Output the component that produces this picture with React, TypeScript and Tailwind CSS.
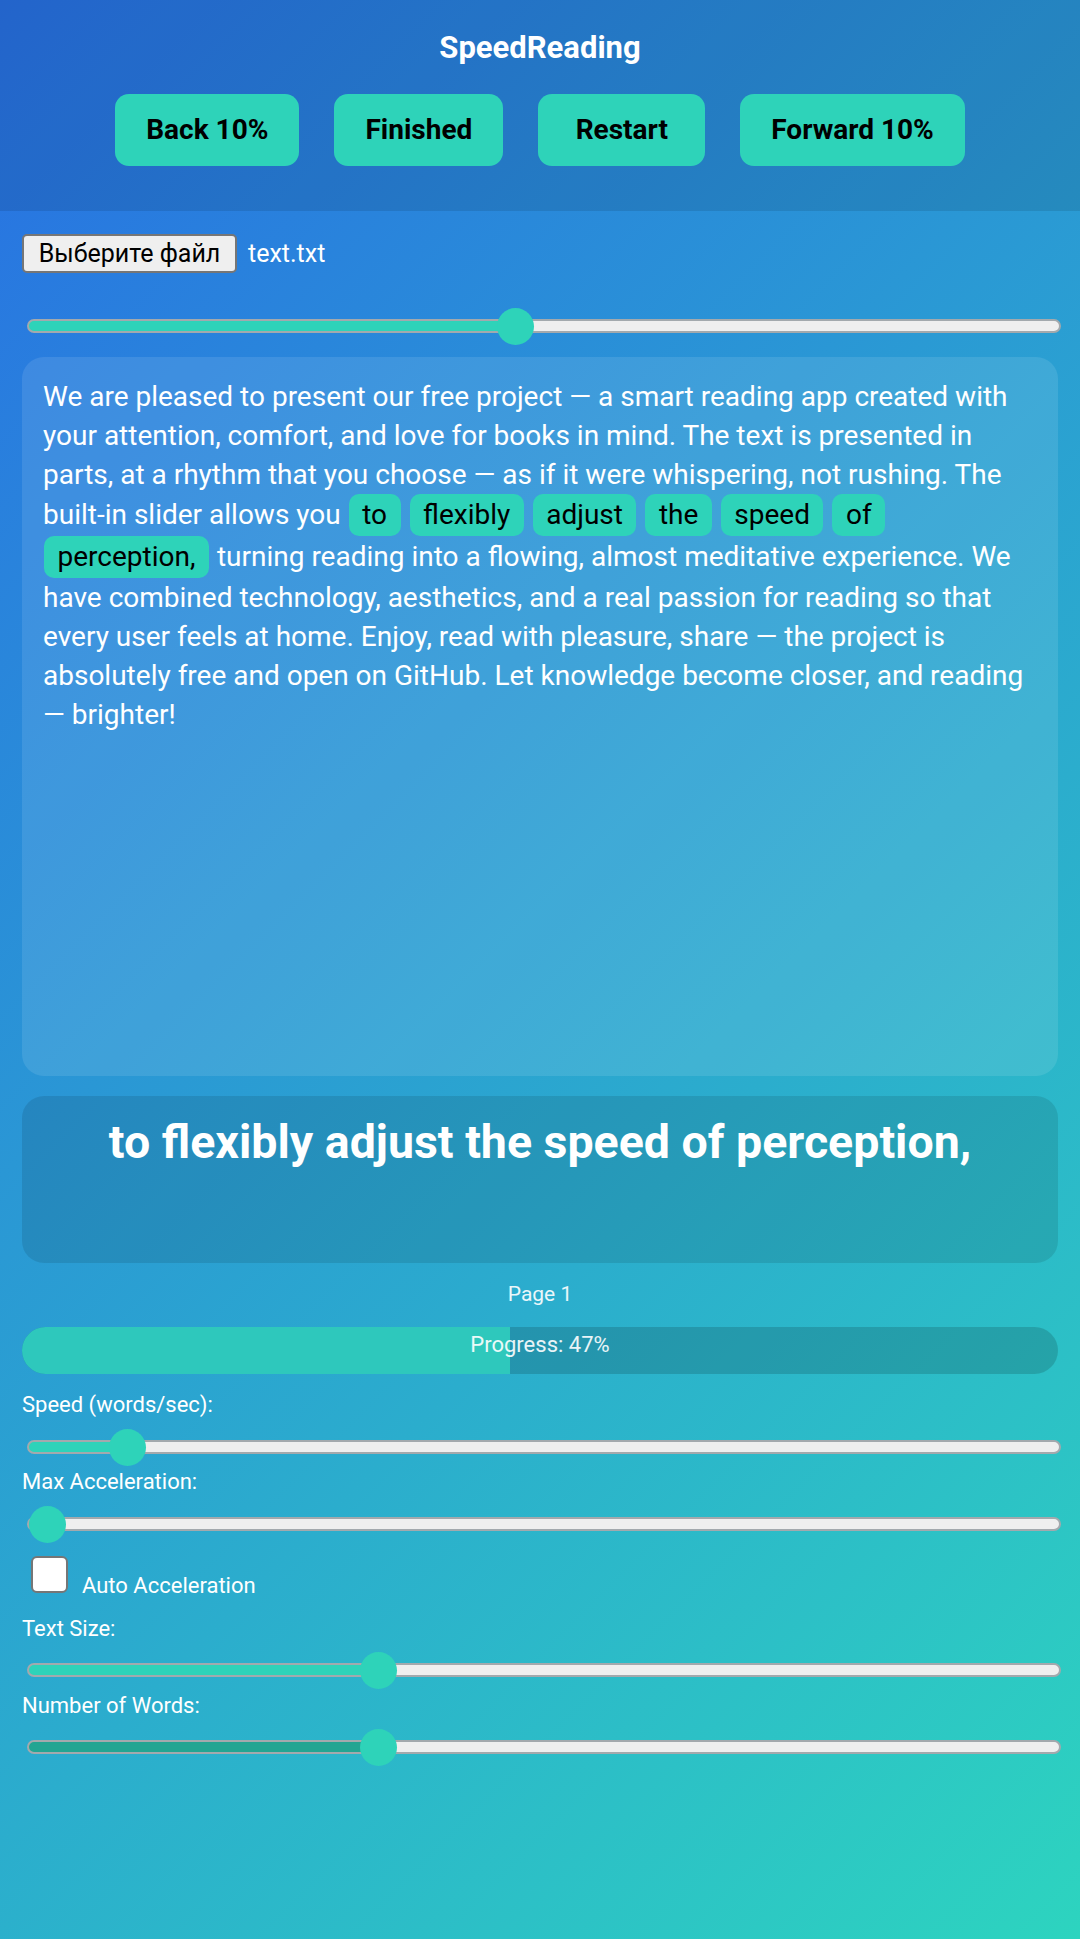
import { useState } from 'react';

const TEXT_BEFORE =
  'We are pleased to present our free project — a smart reading app created with your attention, comfort, and love for books in mind. The text is presented in parts, at a rhythm that you choose — as if it were whispering, not rushing. The built-in slider allows you';
const CHUNK = ['to', 'flexibly', 'adjust', 'the', 'speed', 'of', 'perception,'];
const TEXT_AFTER =
  'turning reading into a flowing, almost meditative experience. We have combined technology, aesthetics, and a real passion for reading so that every user feels at home. Enjoy, read with pleasure, share — the project is absolutely free and open on GitHub. Let knowledge become closer, and reading — brighter!';

function Slider({
  value,
  min = 0,
  max = 100,
  fill = '#2ed3b9',
  onChange,
}: {
  value: number;
  min?: number;
  max?: number;
  fill?: string;
  onChange: (v: number) => void;
}) {
  const p = (value - min) / (max - min);
  return (
    <input
      type="range"
      min={min}
      max={max}
      step="any"
      value={value}
      onChange={(e) => onChange(Number(e.target.value))}
      className="block ml-[5px] w-[calc(100%-2px)] h-[14px] appearance-none rounded-full border-2 border-[#a3a9ad] outline-none [&::-webkit-slider-thumb]:appearance-none [&::-webkit-slider-thumb]:w-[37px] [&::-webkit-slider-thumb]:h-[37px] [&::-webkit-slider-thumb]:rounded-full [&::-webkit-slider-thumb]:bg-[#2ed3b9] [&::-webkit-slider-thumb]:cursor-pointer"
      style={{
        background: `linear-gradient(to right, ${fill} calc(18.5px + ${p} * (100% - 37px)), #efefef 0)`,
      }}
    />
  );
}

export default function App() {
  const [position, setPosition] = useState(47.1);
  const [speed, setSpeed] = useState(8.1);
  const [accel, setAccel] = useState(0);
  const [auto, setAuto] = useState(false);
  const [size, setSize] = useState(33.3);
  const [words, setWords] = useState(33.3);

  return (
    <div className="min-h-screen bg-[linear-gradient(135deg,#2870e3,#2dd4bf)] font-['Roboto',sans-serif] text-white pb-10">
      {/* Шапка */}
      <header className="bg-black/10 pt-[30px] pb-[45px] flex flex-col items-center">
        <h1 className="text-[31px] leading-[36px] font-bold">SpeedReading</h1>
        <div className="mt-[28px] flex gap-[35px]">
          {['Back 10%', 'Finished', 'Restart', 'Forward 10%'].map((b) => (
            <button
              key={b}
              className="h-[72px] min-w-[167px] px-[31px] rounded-[14px] bg-[#2ed3b9] text-black text-[28px] font-bold"
            >
              {b}
            </button>
          ))}
        </div>
      </header>

      <main className="px-[22px] pt-[23px]">
        {/* Файл */}
        <div className="flex items-center gap-[11px]">
          <label className="h-[39px] w-[215px] flex items-center justify-center rounded-[5px] border-2 border-[#767676] bg-[#efefef] text-black text-[25px]">
            Выберите файл
          </label>
          <span className="text-[25px]">text.txt</span>
        </div>

        <div className="mt-[46px]">
          <Slider value={position} onChange={setPosition} />
        </div>

        {/* Текст */}
        <div className="mt-[24px] h-[719px] rounded-[22px] bg-white/10 px-[21px] py-[20px] text-[28px] leading-[39px]">
          {TEXT_BEFORE}{' '}
          {CHUNK.map((w) => (
            <span key={w}>
              <span className="inline-block mx-px px-[13.5px] py-[4px] leading-[34px] rounded-[10px] bg-[#2ed3b9] text-black">
                {w}
              </span>{' '}
            </span>
          ))}
          {TEXT_AFTER}
        </div>

        {/* Текущие слова */}
        <div className="mt-[20px] h-[167px] rounded-[22px] bg-black/10 pt-[18px] text-center text-[46.5px] leading-[56px] font-bold">
          {CHUNK.join(' ')}
        </div>

        <div className="mt-[18px] text-center text-[21px] leading-[26px] text-white/90">Page 1</div>

        <div className="relative mt-[20px] h-[47px] rounded-full bg-black/15 overflow-hidden">
          <div className="h-full bg-[#2ec8bc]" style={{ width: `${position}%` }} />
          <div className="absolute inset-0 pt-[5px] text-center text-[22px] leading-[26px] text-white/90">
            Progress: {Math.round(position)}%
          </div>
        </div>

        {/* Настройки */}
        <div className="mt-[19px] text-[22px] leading-[24px]">Speed (words/sec):</div>
        <div className="mt-[23px]">
          <Slider value={speed} onChange={setSpeed} />
        </div>

        <div className="mt-[16px] text-[22px] leading-[24px]">Max Acceleration:</div>
        <div className="mt-[23px]">
          <Slider value={accel} onChange={setAccel} />
        </div>

        <div className="mt-[25px] flex items-start">
          <input
            type="checkbox"
            checked={auto}
            onChange={(e) => setAuto(e.target.checked)}
            className="ml-[9px] w-[37px] h-[37px] appearance-none rounded-[6px] border-2 border-[#767676] bg-white checked:bg-[#2ed3b9]"
          />
          <span className="ml-[14px] mt-[18px] text-[22px] leading-[24px]">Auto Acceleration</span>
        </div>

        <div className="mt-[19px] text-[22px] leading-[24px]">Text Size:</div>
        <div className="mt-[22px]">
          <Slider value={size} onChange={setSize} />
        </div>

        <div className="mt-[17px] text-[22px] leading-[24px]">Number of Words:</div>
        <div className="mt-[22px]">
          <Slider value={words} onChange={setWords} fill="#22a592" />
        </div>
      </main>
    </div>
  );
}
